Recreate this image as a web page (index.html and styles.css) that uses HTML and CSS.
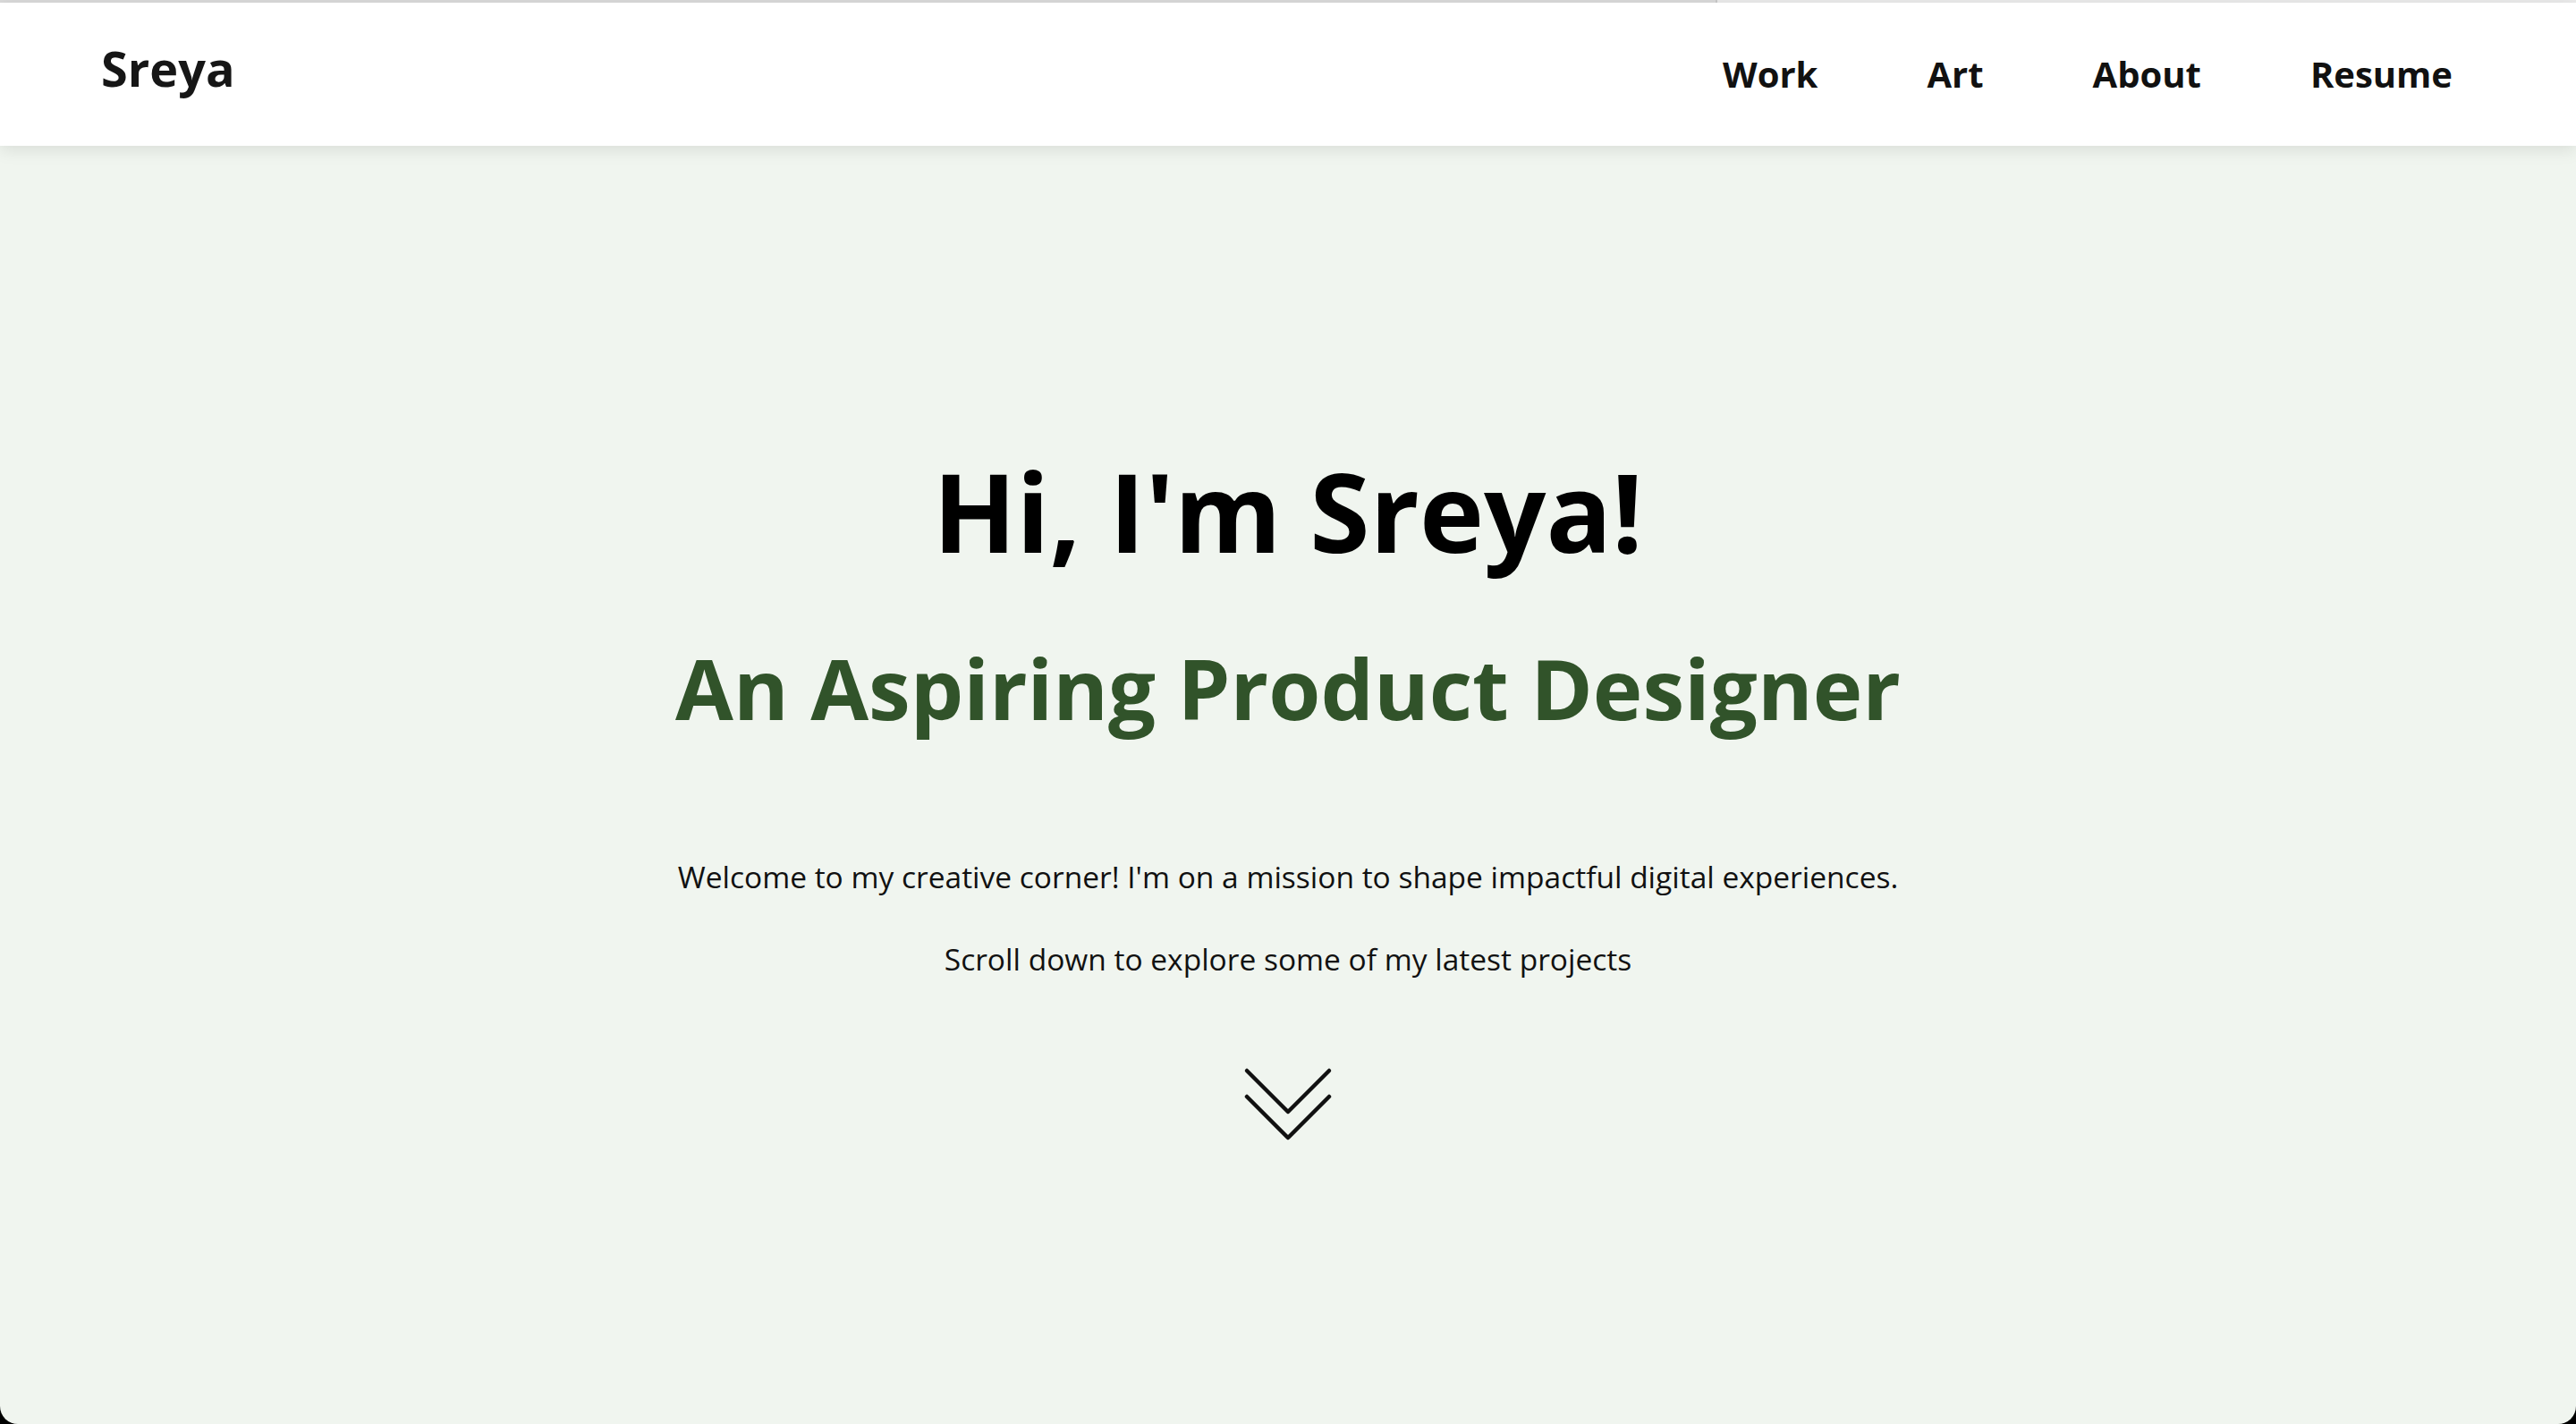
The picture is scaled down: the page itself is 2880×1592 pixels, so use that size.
FILE: index.html
```html
<!DOCTYPE html>
<html lang="en">
<head>
<meta charset="utf-8">
<title>Sreya</title>
<link rel="stylesheet" href="styles.css">
</head>
<body>
<div class="window">
  <div class="topstrip"><div class="topstrip-left"></div><div class="topstrip-right"></div></div>
  <header class="header">
    <a class="logo" href="#">Sreya</a>
    <nav class="nav">
      <a href="#">Work</a>
      <a href="#">Art</a>
      <a href="#">About</a>
      <a href="#">Resume</a>
    </nav>
  </header>
  <main class="hero">
    <h1 class="hero-title">Hi, I'm Sreya!</h1>
    <h2 class="hero-subtitle">An Aspiring Product Designer</h2>
    <p class="hero-text first">Welcome to my creative corner! I'm on a mission to shape impactful digital experiences.</p>
    <p class="hero-text">Scroll down to explore some of my latest projects</p>
    <svg class="chevron" width="102" height="86" viewBox="0 0 102 86" aria-hidden="true">
      <polyline points="5,5 51,51 97,5" />
      <polyline points="5,34 51,80 97,34" />
    </svg>
  </main>
</div>
</body>
</html>
```
FILE: styles.css
```css
html, body {
  margin: 0;
  padding: 0;
  background: #000;
}
body {
  font-family: "Open Sans", "Noto Sans", sans-serif;
}
.window {
  width: 2880px;
  height: 1592px;
  background: #f0f5ef;
  border-radius: 0 0 20px 20px;
  overflow: hidden;
  display: flex;
  flex-direction: column;
}
.topstrip {
  height: 3px;
  display: flex;
  flex: none;
}
.topstrip-left {
  width: 1918px;
  background: #dadada;
  border-right: 2px solid #c9c9c9;
}
.topstrip-right {
  flex: 1;
  background: #ebebeb;
}
.header {
  flex: none;
  height: 160px;
  background: #fff;
  display: flex;
  align-items: center;
  justify-content: space-between;
  padding: 0 138px 0 113px;
  box-shadow: 0 4px 18px rgba(0, 0, 0, 0.1);
  position: relative;
  z-index: 1;
}
.logo {
  font-size: 54px;
  line-height: 1;
  font-weight: 700;
  color: #161616;
  text-decoration: none;
  margin-bottom: 15px;
}
.nav {
  display: flex;
  gap: 122px;
}
.nav a {
  font-size: 40px;
  line-height: 1;
  font-weight: 700;
  color: #111;
  text-decoration: none;
}
.hero {
  flex: 1;
  display: flex;
  flex-direction: column;
  align-items: center;
  text-align: center;
}
.hero-title {
  margin: 335px 0 0;
  font-size: 122px;
  line-height: 146px;
  font-weight: 700;
  color: #000;
}
.hero-subtitle {
  margin: 69px 0 0;
  font-size: 94px;
  line-height: 112px;
  font-weight: 700;
  color: #31532a;
}
.hero-text {
  margin: 44px 0 0;
  font-size: 33.5px;
  line-height: 48px;
  color: #111;
}
.hero-text.first {
  margin-top: 131px;
}
.chevron {
  margin-top: 96px;
  fill: none;
  stroke: #111;
  stroke-width: 4.5;
  stroke-linecap: round;
  stroke-linejoin: round;
}
```
